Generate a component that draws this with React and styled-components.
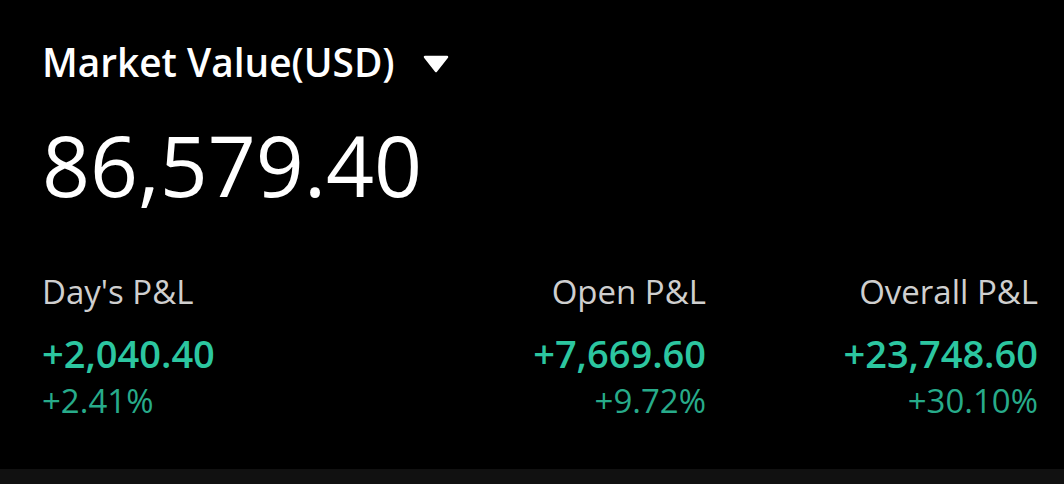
import React from "react";
import styled, { createGlobalStyle } from "styled-components";

const Global = createGlobalStyle`
    html, body {
        margin: 0;
        padding: 0;
        background: #000;
    }
    body {
        font-family: "Open Sans", "Noto Sans", sans-serif;
    }
`;

const stats = [
    { label: "Day's P&L", value: "+2,040.40", pct: "+2.41%", align: "left" },
    { label: "Open P&L", value: "+7,669.60", pct: "+9.72%", align: "right" },
    { label: "Overall P&L", value: "+23,748.60", pct: "+30.10%", align: "right" },
];

const App = () => {
    return (
        <>
            <Global />
            <Page>
                <Card>
                    <Title>
                        Market Value(USD)
                        <Caret viewBox="0 0 26 18">
                            <path d="M2 2 H24 L13 16 Z" fill="#fff" strokeLinejoin="round" stroke="#fff" strokeWidth="2.5" />
                        </Caret>
                    </Title>
                    <Total>86,579.40</Total>
                    <Stats>
                        {stats.map((s, idx) => (
                            <Stat key={idx} $align={s.align}>
                                <Label>{s.label}</Label>
                                <Value>{s.value}</Value>
                                <Pct>{s.pct}</Pct>
                            </Stat>
                        ))}
                    </Stats>
                </Card>
                <Footer />
            </Page>
        </>
    );
};

const Page = styled.div`
    width: 1064px;
    height: 484px;
    background: #000;
    display: flex;
    flex-direction: column;
`;

const Card = styled.div`
    flex: 1;
    padding: 38px 26px 0 42px;
`;

const Title = styled.div`
    display: flex;
    align-items: center;
    gap: 28px;
    color: #fff;
    font-size: 38.8px;
    font-weight: 600;
    line-height: 48px;
`;

const Caret = styled.svg`
    width: 26px;
    height: 18px;
    margin-top: 4px;
`;

const Total = styled.div`
    color: #fff;
    font-size: 84px;
    font-weight: 500;
    line-height: 100px;
    margin-top: 29px;
`;

const Stats = styled.div`
    display: grid;
    grid-template-columns: repeat(3, 1fr);
    margin-top: 57px;
`;

const Stat = styled.div`
    display: flex;
    flex-direction: column;
    align-items: ${(p) => (p.$align === "left" ? "flex-start" : "flex-end")};
`;

const Label = styled.div`
    color: #cfcfcf;
    font-size: 33px;
    line-height: 40px;
`;

const Value = styled.div`
    color: #2cc6a0;
    font-size: 38px;
    font-weight: 600;
    line-height: 46px;
    margin-top: 18px;
`;

const Pct = styled.div`
    color: #27ab8a;
    font-size: 33px;
    line-height: 40px;
    margin-top: 5px;
`;

const Footer = styled.div`
    height: 15px;
    background: #111;
`;

export default App;
